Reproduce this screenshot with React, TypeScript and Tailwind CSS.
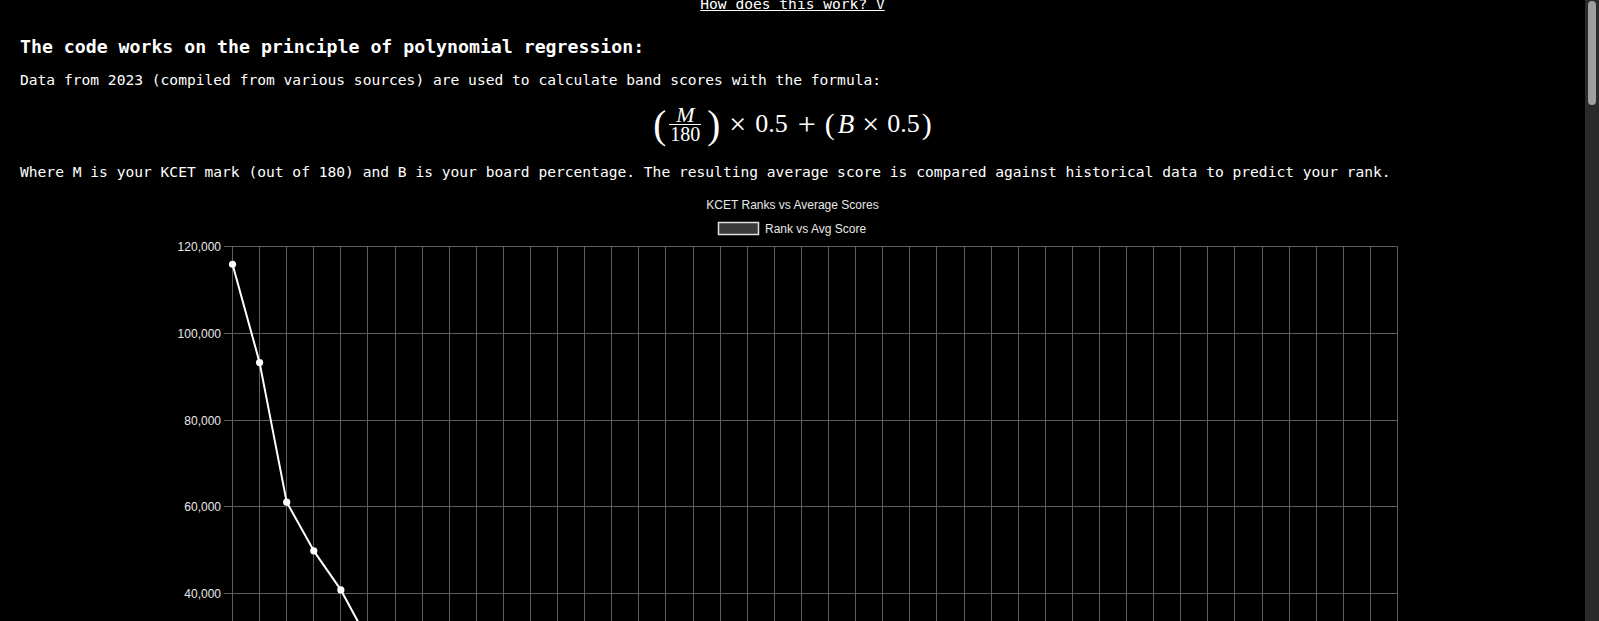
import React from "react";

// rank for each average-score bucket (descending)
const ranks: number[] = [
  115800, 93130, 60985, 49760, 40760, 29200, 22400, 17300, 13500, 10600, 8400, 6700, 5400, 4400,
  3600, 3000, 2500, 2100, 1780, 1520, 1300, 1120, 970, 840, 730, 640, 560, 490, 430, 380, 335, 295,
  260, 230, 200, 175, 150, 130, 110, 90, 70, 50, 30, 10,
];

const labels = ranks.map((_, i) => (55 + i * 0.95).toFixed(1));

const left = 90;
const right = 1255;
const top = 59;
const rowH = 86.8;
const step = (right - left) / (ranks.length - 1);
const ticks = [120000, 100000, 80000, 60000, 40000, 20000, 0];

const yOf = (v: number) => top + ((120000 - v) / 20000) * rowH;
const xOf = (i: number) => left + i * step;
const bottom = Math.round(yOf(0));

function RankChart() {
  const points = ranks.map((r, i) => `${xOf(i) + 0.5},${yOf(r)}`).join(" ");

  return (
    <svg width={1301} height={660} className="mx-auto mt-[6px] block">
      <text x={650.5} y={22} textAnchor="middle" fontSize={12} fill="#e8e8e8" fontFamily="Liberation Sans, Arial, sans-serif">
        KCET Ranks vs Average Scores
      </text>

      {/* legend */}
      <rect x={576.5} y={35.5} width={40} height={12} fill="#3a3a3a" stroke="#e0e0e0" strokeWidth={1.5} />
      <text x={623} y={46.3} fontSize={12} fill="#e8e8e8" fontFamily="Liberation Sans, Arial, sans-serif">
        Rank vs Avg Score
      </text>

      {/* grid */}
      {ranks.map((_, i) => {
        const x = Math.round(xOf(i)) + 0.5;
        return <line key={`v${i}`} x1={x} x2={x} y1={top + 0.5} y2={bottom + 8} stroke="#5e5e5e" strokeWidth={1} />;
      })}
      {ticks.map((t) => {
        const y = Math.round(yOf(t)) + 0.5;
        return (
          <g key={t}>
            <line x1={left - 8} x2={right + 0.5} y1={y} y2={y} stroke="#5e5e5e" strokeWidth={1} />
            <text x={79} y={y + 4} textAnchor="end" fontSize={12} fill="#e8e8e8" fontFamily="Liberation Sans, Arial, sans-serif">
              {t.toLocaleString("en-US")}
            </text>
          </g>
        );
      })}

      {/* x labels */}
      {labels.map((l, i) => (
        <text
          key={l}
          x={xOf(i) + 0.5}
          y={bottom + 24}
          textAnchor="middle"
          fontSize={11}
          fill="#e8e8e8"
          fontFamily="Liberation Sans, Arial, sans-serif"
        >
          {l}
        </text>
      ))}

      <polyline points={points} fill="none" stroke="#ffffff" strokeWidth={2} strokeLinejoin="round" />
      {ranks.map((r, i) => (
        <circle key={`p${i}`} cx={xOf(i) + 0.5} cy={yOf(r)} r={3.6} fill="#ffffff" />
      ))}
    </svg>
  );
}

function Formula() {
  return (
    <div className="mt-[12px] flex h-[46px] items-center justify-center font-['Liberation_Serif',serif] text-[26px] leading-none text-white">
      <span className="text-[39px] leading-none">(</span>
      <span className="ml-[3px] inline-flex flex-col items-center">
        <span className="px-[1px] text-[22px] italic leading-[19px]">M</span>
        <span className="h-px w-full bg-white" />
        <span className="px-[1px] text-[20px] leading-[19px]">180</span>
      </span>
      <span className="ml-[6px] text-[39px] leading-none">)</span>
      <span className="ml-[9px] text-[30px]">×</span>
      <span className="ml-[9px]">0.5</span>
      <span className="ml-[10px] text-[32px]">+</span>
      <span className="ml-[9px] text-[30px]">(</span>
      <span className="ml-[3px] text-[27px] italic">B</span>
      <span className="ml-[8px] text-[30px]">×</span>
      <span className="ml-[8px]">0.5</span>
      <span className="ml-[2px] text-[30px]">)</span>
    </div>
  );
}

export default function App() {
  return (
    <div className="flex bg-black text-white">
      <main className="min-w-0 flex-1 pb-10 font-['DejaVu_Sans_Mono',monospace]">
        <div className="-mt-[5px] px-5">
          <div className="text-center text-[14.6px] leading-[18px]">
            <a href="#" className="text-white underline">
              How does this work? V
            </a>
          </div>

          <h3 className="mt-[22.5px] text-[18.2px] font-bold leading-[22px]">
            The code works on the principle of polynomial regression:
          </h3>
          <p className="mt-[13.5px] text-[14.6px] leading-[18px]">
            Data from 2023 (compiled from various sources) are used to calculate band scores with the formula:
          </p>

          <Formula />

          <p className="mt-[15.5px] text-[14.6px] leading-[18px]">
            Where M is your KCET mark (out of 180) and B is your board percentage. The resulting average score is
            compared against historical data to predict your rank.
          </p>

          <RankChart />
        </div>
      </main>

      {/* page scrollbar */}
      <aside className="w-[14px] shrink-0 bg-[#2b2b2b]">
        <div className="ml-[3px] mt-[1px] h-[104px] w-[8px] rounded-full bg-[#9f9f9f]" />
      </aside>
    </div>
  );
}
